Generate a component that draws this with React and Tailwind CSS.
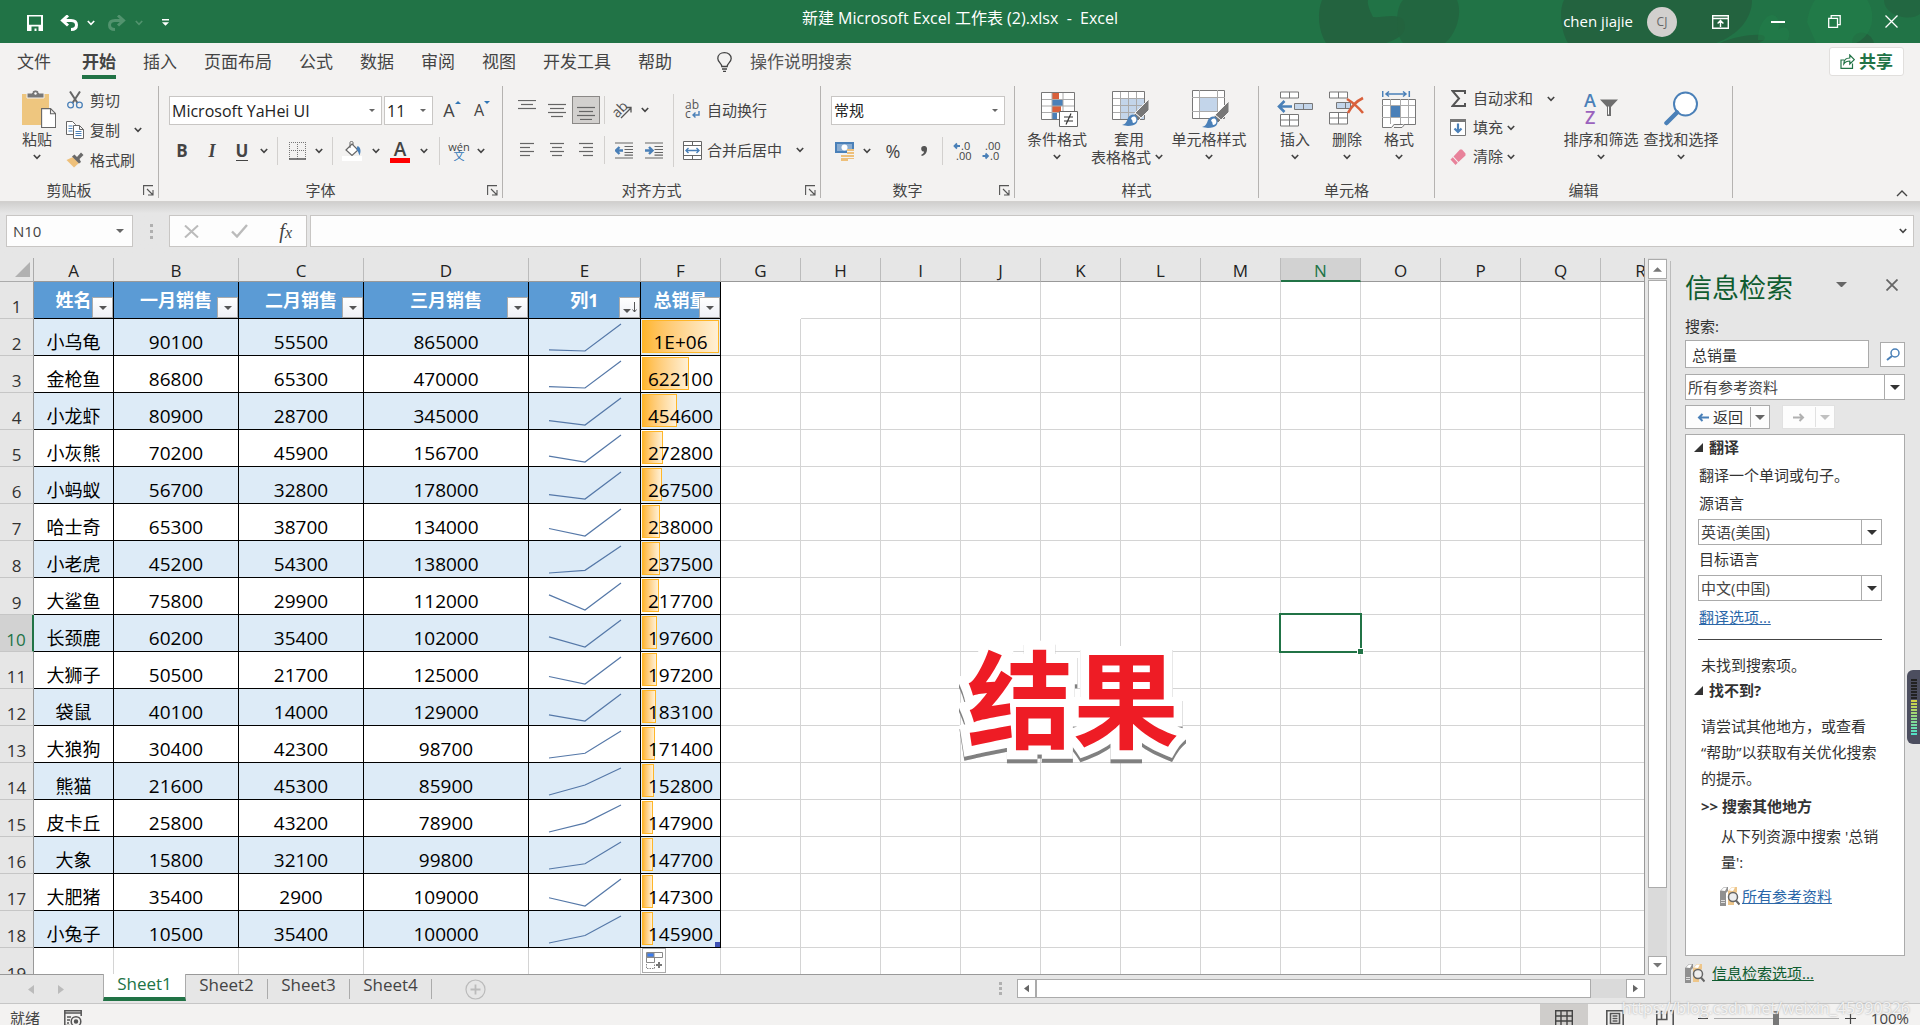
const tabs = ['插入', '页面布局', '公式', '数据', '审阅', '视图', '开发工具', '帮助'];

const rows = [
  ['小乌龟', 90100, 55500, 865000],
  ['金枪鱼', 86800, 65300, 470000],
  ['小龙虾', 80900, 28700, 345000],
  ['小灰熊', 70200, 45900, 156700],
  ['小蚂蚁', 56700, 32800, 178000],
  ['哈士奇', 65300, 38700, 134000],
  ['小老虎', 45200, 54300, 138000],
  ['大鲨鱼', 75800, 29900, 112000],
  ['长颈鹿', 60200, 35400, 102000],
  ['大狮子', 50500, 21700, 125000],
  ['袋鼠', 40100, 14000, 129000],
  ['大狼狗', 30400, 42300, 98700],
  ['熊猫', 21600, 45300, 85900],
  ['皮卡丘', 25800, 43200, 78900],
  ['大象', 15800, 32100, 99800],
  ['大肥猪', 35400, 2900, 109000],
  ['小兔子', 10500, 35400, 100000],
];

const headers = ['姓名', '一月销售', '二月销售', '三月销售', '列1', '总销量'];
const letters = 'ABCDEFGHIJKLMNOPQR'.split('');
const emptyCols = letters.slice(6);
const maxTotal = 1010600;

const Chevron = ({ className = 'w-4', color = '#444' }) => (
  <span className={`flex shrink-0 justify-center ${className}`}>
    <svg className="shrink-0" width="8" height="6" viewBox="0 0 8 6" fill="none" stroke={color} strokeWidth="1.6">
      <path d="M0.8 1 4 4.4 7.2 1" />
    </svg>
  </span>
);

const Caret = ({ color = '#666', size = 8 }) => (
  <svg className="shrink-0" width={size} height={size / 2} viewBox="0 0 8 4" fill={color}>
    <path d="M0 0h8L4 4z" />
  </svg>
);

const Sep = ({ className = 'mx-[5px]' }) => <span className={`h-7 w-px bg-[#d2d0ce] ${className}`} />;

const IconButton = ({ label, className = 'w-7', children }) => (
  <button aria-label={label} className={`flex h-7 shrink-0 items-center justify-center ${className}`}>
    {children}
  </button>
);

const Lines = ({ align, y = 3, color = '#666' }) => {
  const widths = align === 'top' ? [18, 12, 18] : align === 'mid' || align === 'bottom' ? [18, 14, 18, 12] : [14, 10, 14, 10];
  return (
    <svg width="18" height="20" viewBox="0 0 18 20" stroke={color} strokeWidth="1.2">
      {widths.map((w, i) => {
        const x = align === 'left' ? 2 : align === 'right' ? 16 - w : (18 - w) / 2;
        return <path key={i} d={`M${x} ${y + i * 4 + 0.5}h${w}`} />;
      })}
    </svg>
  );
};

const Group = ({ title, launcher, className, children }) => (
  <section className={`flex h-28 shrink-0 flex-col border-r border-[#b5b3b1] ${className}`}>
    <div className="flex flex-1">{children}</div>
    <div className="flex h-4 items-center">
      <span className={`flex-1 text-center leading-4 ${launcher ? '' : 'pl-5'}`}>{title}</span>
      <span className="flex w-5 justify-center">
        {launcher && (
          <button aria-label={`${title}设置`}>
            <svg width="11" height="11" viewBox="0 0 11 11" fill="none" stroke="#555" strokeWidth="1.1">
              <path d="M0.6 10V0.6H10M4 4l5.5 5.5M10 5v5H5" />
            </svg>
          </button>
        )}
      </span>
    </div>
  </section>
);

const BigButton = ({ icon, label, second, className }) => (
  <button className={`flex shrink-0 flex-col items-center pt-0.5 whitespace-nowrap ${className}`}>
    <span className="flex h-[42px] items-center">{icon}</span>
    <span className="leading-[18px]">{label}</span>
    <span className="flex h-[18px] items-center">
      {second}
      <Chevron />
    </span>
  </button>
);

const SmallButton = ({ icon, label, className = 'h-[30px]', chevron }) => (
  <button className={`flex items-center whitespace-nowrap ${className}`}>
    <span className="mr-1.5 flex w-[18px] justify-center">{icon}</span>
    {label}
    {chevron}
  </button>
);

const Select = ({ label, options, className, box, dark }) => (
  <span className={`relative flex ${className}`}>
    <select
      aria-label={label}
      className={`w-full appearance-none border bg-white outline-none ${dark ? 'border-[#ababab] pl-0.5 text-[#444]' : 'border-[#c8c6c4] pl-0.5 text-[#222]'}`}
    >
      {options.map((o) => (
        <option key={o}>{o}</option>
      ))}
    </select>
    <span
      className={`pointer-events-none absolute inset-y-0 right-0 flex w-[21px] items-center justify-center ${box ? 'border-l border-[#ababab]' : ''}`}
    >
      <Caret size={box ? 10 : 6} color={dark ? '#333' : '#666'} />
    </span>
  </span>
);

const TitleArt = () => (
  <svg className="absolute top-0 right-0" width="640" height="43" viewBox="0 0 640 43">
    <g fill="#23633f">
      <path d="M42 0c-5 12-4 30 4 43h60c12-4 24-10 17-24-8-6-20-1-30-2-4-8-6-14-5-17z" />
      <path d="M123 0c-8 8-8 34 0 43h42c10-8 18-28 12-43z" opacity=".8" />
      <path d="M284 0c-6 12-2 34 4 43h148c22-8 36-24 36-43z" />
      <path d="M440 43c14-6 30-9 42-8 6 2 2 6-4 8zM572 43c0-14 18-14 22 0z" />
      <path d="M604 0c0 16 26 22 36 14V0z" opacity=".7" />
    </g>
    <g fill="#217f4a">
      <path d="M527 22c4-26 16-30 27-30h26c18 14 16 42-4 51h-40z" opacity=".6" />
      <path d="M486 18c8-8 16 2 12 12 8-6 14 0 10 10h-30c0-8 2-16 8-22z" opacity=".5" />
    </g>
  </svg>
);

const TitleBar = () => (
  <header className="relative grid h-[43px] shrink-0 grid-cols-[1fr_auto_1fr] bg-[#217346] text-white">
    <TitleArt />
    <div className="flex items-center pt-0.5 pl-[21px]">
      <IconButton label="保存">
        <svg width="16" height="16" viewBox="0 0 16 16">
          <path d="M0 0h16v16H0z" fill="#fff" />
          <path d="M2 1.4h12v8.4H2zM4.5 11.400h7V16h-2v-2.600h-2V16h-3z" fill="#217346" />
        </svg>
      </IconButton>
      <IconButton label="撤消" className="ml-1 w-8">
        <svg width="18" height="16" viewBox="0 0 18 16" fill="none" stroke="#fff" strokeWidth="3">
          <path d="M2.500 5.500H11c3.500 0 5.500 1.800 5.500 4.500S14.500 14.500 11 14.500M8 0.500 2.500 5.500 8 10.500" />
        </svg>
      </IconButton>
      <Chevron className="w-3" color="#fff" />
      <IconButton label="恢复" className="ml-1 w-8">
        <svg width="18" height="16" viewBox="0 0 18 16" fill="none" stroke="#52936e" strokeWidth="3">
          <path d="M15.500 5.500H7c-3.500 0-5.500 1.800-5.500 4.500S3.500 14.500 7 14.500M10 0.500l5.500 5-5.500 5" />
        </svg>
      </IconButton>
      <Chevron className="w-3" color="#52936e" />
      <IconButton label="自定义快速访问工具栏" className="w-10">
        <svg width="7" height="7" viewBox="0 0 7 7" fill="#fff">
          <path d="M0 0h7v1.400H0zM0 3.200h7L3.500 6.800z" />
        </svg>
      </IconButton>
    </div>
    <h1 className="relative pt-[7px] text-base leading-[22px] whitespace-pre">新建 Microsoft Excel 工作表 (2).xlsx  -  Excel</h1>
    <div className="relative flex items-center justify-end">
      <span>chen jiajie</span>
      <span className="mr-[15px] ml-3.5 flex size-[30px] items-center justify-center rounded-full bg-[#d2d0ce] text-xs text-[#666]">CJ</span>
      <IconButton label="功能区显示选项" className="w-[57px]">
        <svg width="17" height="14" viewBox="0 0 17 14" fill="none" stroke="#fff" strokeWidth="1.400">
          <path d="M0.700 0.700h15.600v12.600H0.700zM0.700 3.500h15.600M8.500 12V5.600M5.600 8.400l2.900-2.900 2.900 2.900" />
        </svg>
      </IconButton>
      <IconButton label="最小化" className="w-[57px]">
        <span className="h-0.5 w-3.5 bg-white" />
      </IconButton>
      <IconButton label="向下还原" className="w-[57px]">
        <svg width="13" height="13" viewBox="0 0 13 13" fill="none" stroke="#fff" strokeWidth="1.300">
          <path d="M0.700 3.300h8.800v9H0.700zM3.200 3V0.700h9v9H10" />
        </svg>
      </IconButton>
      <IconButton label="关闭" className="w-[57px]">
        <svg width="13" height="13" viewBox="0 0 13 13" stroke="#fff" strokeWidth="1.300">
          <path d="M0.500 0.500l12 12M12.500 0.500l-12 12" />
        </svg>
      </IconButton>
    </div>
  </header>
);

const TabRow = () => (
  <nav className="flex h-[37px] shrink-0 items-start pr-4 pl-[17px] text-[17px] leading-[38px]">
    <a href="#file">文件</a>
    <a href="#home" className="ml-[31px] h-9 border-b-4 border-[#217346] font-bold">
      开始
    </a>
    {tabs.map((t) => (
      <a key={t} href={`#${t}`} className="ml-[27px]">
        {t}
      </a>
    ))}
    <button className="ml-[45px] flex items-center text-[#555]">
      <svg className="mr-[18px]" width="15" height="20" viewBox="0 0 15 20" fill="none" stroke="#444" strokeWidth="1.300">
        <path d="M4.800 14.500c0-3-4-4.300-4-8C0.800 3 3.700 0.700 7.500 0.700S14.200 3 14.200 6.500c0 3.700-4 5-4 8zM5 17h5M6 19.300h3" />
      </svg>
      操作说明搜索
    </button>
    <button className="mt-1 ml-auto flex h-[29px] w-[75px] items-center justify-center gap-1 rounded-[3px] border border-[#e1dfdd] bg-white font-bold text-[#217346]">
      <svg width="15" height="15" viewBox="0 0 15 15" fill="none" stroke="#217346" strokeWidth="1.200">
        <path d="M4 6H1v8.400h11.500v-5M3.800 10c0-4 2-6 6-6V1l4.500 4.600-4.500 4.400V7c-3 0-4.600.8-6 3z" />
      </svg>
      共享
    </button>
  </nav>
);

const Brush = ({ x, y }) => (
  <g transform={`translate(${x} ${y})`}>
    <path d="M27 0v11l-8 8-6-5z" fill="#777" stroke="#f3f2f1" />
    <path d="M13 14l6 5-3 3-5-5z" fill="#777" stroke="#f3f2f1" />
    <path d="M0 26c4-1 5-4 6-7 2-4 7-5 9-1 2 5-1 9-9 9z" fill="#4a80b8" />
    <path d="M9 20c1-3 4-3 5-1s0 5-3 5c-1-2 0-3-2-4z" fill="#fff" />
  </g>
);

const ClipboardGroup = () => (
  <Group title="剪贴板" launcher className="w-[159px]">
    <BigButton
      className="ml-2.5 w-[54px]"
      label="粘贴"
      icon={
        <svg className="ml-1" width="34" height="38" viewBox="0 0 34 38">
          <path d="M0 4h27v31H0z" fill="#eec67f" />
          <path d="M5 8V3h5c0-4 7-4 7 0h5v5z" fill="#777" stroke="#f3f2f1" />
          <circle cx="13.500" cy="3.500" r="1.200" fill="#fff" />
          <path d="M19.600 18.600h9l5 5v14h-14zM28.500 18.600v5.200h5" fill="#fff" stroke="#666" strokeWidth="1.100" />
        </svg>
      }
    />
    <div className="-mt-px flex flex-col pl-0.5">
      <SmallButton
        label="剪切"
        icon={
          <svg width="16" height="18" viewBox="0 0 16 18" fill="none">
            <path d="M3 0.500 10.500 12M13 0.500 5.500 12" stroke="#666" strokeWidth="2" />
            <circle cx="3.600" cy="14" r="2.900" stroke="#4a80b8" strokeWidth="1.300" />
            <circle cx="12.400" cy="14" r="2.900" stroke="#4a80b8" strokeWidth="1.300" />
          </svg>
        }
      />
      <SmallButton
        label="复制"
        chevron={<Chevron className="ml-2.5 w-4" />}
        icon={
          <svg width="18" height="18" viewBox="0 0 18 18" fill="#fff" stroke="#666">
            <path d="M0.500 0.500h6l3 3v10h-9z" />
            <path d="M2.500 5h4M2.500 7.500h4M2.500 10h4" stroke="#4a80b8" />
            <path d="M7.500 4.500h6l4 4v9h-10zM13.500 4.500v4h4" />
            <path d="M9.500 10.500h6M9.500 12.500h6M9.500 14.500h6" stroke="#4a80b8" />
          </svg>
        }
      />
      <SmallButton
        label="格式刷"
        icon={
          <svg width="18" height="16" viewBox="0 0 18 16">
            <path d="M0.500 8 7 5l6 6-5 4.500z" fill="#eec07a" />
            <path d="M6 4.500 8.500 2.500 11 5l4-4.500L17.500 3l-4 4 1.500 3-2 1.500z" fill="#6a6a6a" />
          </svg>
        }
      />
    </div>
  </Group>
);

const FontGroup = () => (
  <Group title="字体" launcher className="w-[344px]">
    <div className="flex flex-col gap-3 pt-2.5 pl-[9px]">
      <div className="flex">
        <Select label="字体" options={['Microsoft YaHei UI']} className="ml-px h-[29px] w-[213px] text-base" />
        <Select label="字号" options={['11']} className="mr-1 ml-0.5 h-[29px] w-[49px] text-base" />
        <IconButton label="增大字号" className="w-[30px]">
          <span className="text-lg">A</span>
          <svg className="mb-4" width="6" height="3" viewBox="0 0 8 4" fill="#2f75b5">
            <path d="M0 4h8L4 0z" />
          </svg>
        </IconButton>
        <IconButton label="减小字号" className="w-[30px]">
          <span className="text-base">A</span>
          <svg className="mb-4" width="6" height="3" viewBox="0 0 8 4" fill="#2f75b5">
            <path d="M0 0h8L4 4z" />
          </svg>
        </IconButton>
      </div>
      <div className="flex items-center">
        <IconButton label="加粗">
          <b className="text-[17px]">B</b>
        </IconButton>
        <IconButton label="倾斜" className="w-8">
          <i className="font-['Liberation_Serif',serif] text-lg font-bold">I</i>
        </IconButton>
        <IconButton label="下划线">
          <b className="border-b border-[#444] text-[17px] leading-[18px]">U</b>
        </IconButton>
        <Chevron />
        <Sep />
        <IconButton label="边框">
          <svg width="17" height="18" viewBox="0 0 17 18" fill="none" stroke="#777">
            <path d="M0 0.500h17M0.500 0v17M8.500 0v17M16.500 0v17M0 8.500h17" strokeDasharray="1 1" />
            <path d="M0 17h17" strokeWidth="1.500" stroke="#555" />
          </svg>
        </IconButton>
        <Chevron />
        <Sep />
        <IconButton label="填充颜色">
          <svg width="20" height="20" viewBox="0 0 20 20">
            <path d="M4 9 10 3l6 6-6 5.500z" fill="#fff" stroke="#666" strokeWidth="1.200" />
            <path d="M8 7V1.500c0-1.500 3-1.500 3 0V4" fill="none" stroke="#666" />
            <path d="M15.500 5c3 1 4 5 2 9.500-1-2-1-4-3-6z" fill="#4a80b8" />
            <path d="M0 15h20v5H0z" fill="#fff" />
          </svg>
        </IconButton>
        <Chevron className="w-5" />
        <IconButton label="字体颜色">
          <span className="border-b-[5px] border-[#f00] px-[4px] text-[19px] leading-[18px] font-semibold">A</span>
        </IconButton>
        <Chevron className="w-5" />
        <Sep />
        <IconButton label="拼音">
          <span className="flex flex-col items-center text-[11px] leading-[9px]">
            wén
            <span className="text-[11px] leading-[10px] text-[#2f75b5]">文</span>
          </span>
        </IconButton>
        <Chevron />
      </div>
    </div>
  </Group>
);

const Indent = ({ flip }) => (
  <svg width="18" height="17" viewBox="0 0 18 17" fill="none" stroke="#666" strokeWidth="1.200">
    <path d="M0 1h18M9.500 4.500H18M9.500 7.500H18M9.500 10.500H18M0 16h18M9.500 13.200H18" />
    <path d={flip ? 'M0 8.500h7M4 5l3.500 3.500L4 12' : 'M8 8.500H1M4.500 5 1 8.500 4.500 12'} stroke="#4a80b8" strokeWidth="2.400" />
  </svg>
);

const AlignGroup = () => (
  <Group title="对齐方式" launcher className="w-[318px]">
    <div className="flex w-[170px] flex-col gap-3 pt-2.5 pl-[9px]">
      <div className="flex items-center">
        <IconButton label="顶端对齐" className="w-[30px]">
          <Lines align="top" y={0} />
        </IconButton>
        <IconButton label="垂直居中" className="w-[30px]">
          <Lines align="mid" y={4} />
        </IconButton>
        <IconButton label="底端对齐" className="w-7 border border-[#8a8886] bg-[#d2d0ce]">
          <Lines align="bottom" y={7} />
        </IconButton>
        <Sep className="mr-1 ml-1" />
        <IconButton label="方向">
          <svg width="20" height="20" viewBox="0 0 20 20" overflow="visible">
            <text x="-1" y="14" transform="rotate(-45 7 10)" fontSize="14" fill="#555">
              ab
            </text>
            <path d="M8 18 18 8M13 7.500h5v5" fill="none" stroke="#555" strokeWidth="1.300" />
          </svg>
        </IconButton>
        <Chevron />
      </div>
      <div className="flex items-center">
        <IconButton label="左对齐" className="w-[30px]">
          <Lines align="left" />
        </IconButton>
        <IconButton label="居中" className="w-[30px]">
          <Lines align="center" />
        </IconButton>
        <IconButton label="右对齐" className="w-7">
          <Lines align="right" />
        </IconButton>
        <Sep className="mr-1 ml-1" />
        <IconButton label="减少缩进量" className="w-[30px]">
          <Indent />
        </IconButton>
        <IconButton label="增加缩进量" className="w-[30px]">
          <Indent flip />
        </IconButton>
      </div>
    </div>
    <span className="mt-2 h-[73px] w-px bg-[#d2d0ce]" />
    <div className="flex flex-col gap-3 pt-2.5 pl-[9px]">
      <SmallButton
        className="h-7"
        label="自动换行"
        icon={
          <svg width="18" height="20" viewBox="0 0 18 20" overflow="visible" fontSize="12" fill="#555">
            <text x="2" y="9">ab</text>
            <text x="2" y="18">c</text>
            <path d="M16 11v4H10M12.500 12.500 10 15l2.500 2.500" fill="none" stroke="#4a80b8" strokeWidth="1.400" />
          </svg>
        }
      />
      <SmallButton
        className="h-7"
        label="合并后居中"
        chevron={<Chevron className="ml-2 w-5" />}
        icon={
          <svg className="shrink-0" width="19" height="19" viewBox="0 0 19 19" fill="#fff" stroke="#666">
            <path d="M0.500 0.500h18v18h-18zM0.500 4.500h18M0.500 14.500h18M9.500 0.500v4M9.500 14.500v4" />
            <path d="M3 9.500h13M5.500 7 3 9.500 5.500 12M13.500 7 16 9.500 13.500 12" fill="none" stroke="#4a80b8" strokeWidth="1.400" />
          </svg>
        }
      />
    </div>
  </Group>
);

const Decimals = ({ top, bottom, arrowTop }) => (
  <svg width="18" height="20" viewBox="0 0 18 20" overflow="visible" fontSize="11" fill="#444">
    <text x={arrowTop ? 8 : 3} y="9">{top}</text>
    <text x={arrowTop ? 3 : 8} y="19">{bottom}</text>
    <path
      d={arrowTop ? 'M7 5H1.500M4 2.500 1.500 5 4 7.500' : 'M0.500 15H6M3.500 12.500 6 15l-2.500 2.500'}
      fill="none"
      stroke="#4a80b8"
      strokeWidth="1.800"
    />
  </svg>
);

const NumberGroup = () => (
  <Group title="数字" launcher className="w-[194px]">
    <div className="flex flex-col gap-3 pt-2.5 pl-2.5">
      <Select label="数字格式" options={['常规']} className="h-[29px] w-[174px]" />
      <div className="flex items-center">
        <IconButton label="会计数字格式">
          <svg width="20" height="20" viewBox="0 0 20 20">
            <path d="M0 1h19v11H0z" fill="#4a80b8" />
            <path d="M2 3h15v7H2z" fill="#fff" opacity=".35" />
            <circle cx="9.500" cy="6.500" r="3" fill="#fff" />
            <path d="M12 8h7v10h-7zM6 14h7v6H6z" fill="#eec07a" />
            <path d="M12 10.500h7M12 13.500h7M6 16.500h13" stroke="#f3f2f1" />
          </svg>
        </IconButton>
        <Chevron />
        <IconButton label="百分比" className="w-9">
          <span className="text-lg">%</span>
        </IconButton>
        <IconButton label="千位分隔" className="w-[26px]">
          <svg width="6" height="10" viewBox="0 0 6 10" fill="#555">
            <path d="M3 0a2.700 2.700 0 0 1 3 3c0 4-2 6.500-5.500 7v-1.500C2.200 8 3 7 3 5.600A2.700 2.700 0 0 1 3 0z" />
          </svg>
        </IconButton>
        <Sep />
        <IconButton label="增加小数位数">
          <Decimals top=".0" bottom=".00" arrowTop />
        </IconButton>
        <IconButton label="减少小数位数" className="w-[30px]">
          <Decimals top=".00" bottom=".0" />
        </IconButton>
      </div>
    </div>
  </Group>
);

const StyleGroup = () => (
  <Group title="样式" className="w-[244px]">
    <BigButton
      className="ml-[7px] w-[70px]"
      label="条件格式"
      icon={
        <svg className="ml-1" width="37" height="35" viewBox="0 0 37 35">
          <path d="M0.500 0.500h33v27h-33z" fill="#fff" />
          <path d="M11 1h7v6h-7zM11 14h9v6h-9z" fill="#d9603b" />
          <path d="M11 7h11v7H11zM11 20h5v7h-5z" fill="#4a80b8" />
          <path d="M0 7.500h33M0 14h33M0 20.500h33M11 0v28M22 0v28" stroke="#aaa" fill="none" />
          <path d="M0.500 0.500h33v27h-33z" fill="none" stroke="#777" />
          <path d="M18.500 19.500h18v15h-18z" fill="#fff" stroke="#666" />
          <path d="M23 25h9M23 29h9M30 21.500l-5 11" stroke="#333" strokeWidth="1.200" />
        </svg>
      }
    />
    <BigButton
      className="w-[74px]"
      label="套用"
      second={<span>表格格式</span>}
      icon={
        <svg className="ml-1" width="38" height="36" viewBox="0 0 38 36">
          <path d="M0.500 0.500h32v28h-32z" fill="#fff" />
          <path d="M9 8h23v20H9z" fill="#c3d5ea" />
          <path d="M0 7.500h33M0 14.500h33M0 21.500h33M8.500 0v28M16.500 0v28M24.500 0v28" stroke="#aaa" />
          <path d="M0.500 0.500h32v28h-32z" fill="none" stroke="#777" />
          <Brush x={10} y={8} />
        </svg>
      }
    />
    <BigButton
      className="w-[86px]"
      label="单元格样式"
      icon={
        <svg className="ml-1" width="38" height="39" viewBox="0 0 38 39">
          <path d="M0.500 0.500h32v28h-32z" fill="#fff" stroke="#777" />
          <path d="M8 8h17v13H8z" fill="#c3d5ea" />
          <path d="M0 7.500h33M0 21.500h33M7.500 0v28M25.500 0v28" stroke="#aaa" />
          <Brush x={10} y={11} />
        </svg>
      }
    />
  </Group>
);

const CellGroup = () => (
  <Group title="单元格" className="w-[176px]">
    <BigButton
      className="ml-2.5 w-[52px]"
      label="插入"
      icon={
        <svg width="36" height="36" viewBox="0 0 36 36" fill="#fff" stroke="#777">
          <path d="M3.500 1h18v6h-18zM12.500 1v6M3.500 23.500h18v11.500h-18zM12.500 23.500V35M3.500 29h18" />
          <path d="M17.500 12.500h18v6h-18zM26.500 12.500v6" fill="#c3d5ea" />
          <path d="M15 15.500H2M7.500 10 2 15.500 7.500 21" fill="none" stroke="#4a80b8" strokeWidth="2.600" />
        </svg>
      }
    />
    <BigButton
      className="w-[52px]"
      label="删除"
      icon={
        <svg width="36" height="36" viewBox="0 0 36 36" fill="#fff" stroke="#777">
          <path d="M0.500 1h18v6h-18zM9.500 1v6M0.500 21.500h18V33h-18zM9.500 21.500V33M0.500 27h18" />
          <path d="M7.500 11.500h14v6h-14zM16.500 11.500v6" fill="#c3d5ea" />
          <path d="M18 8c5 3 11 8 16 14M34 7c-6 3-12 9-15 15" fill="none" stroke="#d9603b" strokeWidth="2.600" />
        </svg>
      }
    />
    <BigButton
      className="w-[52px]"
      label="格式"
      icon={
        <svg width="35" height="37" viewBox="0 0 35 37">
          <path d="M0.500 8.500h33v25h-33z" fill="#fff" stroke="#777" />
          <path d="M0 14.500h33M0 26.500h33M8.500 8v25M18.500 8v25M26.500 8v25" stroke="#aaa" />
          <path d="M9 15h9v11H9z" fill="#4a80b8" />
          <path d="M0.500 33v3.500h9l3-3.500M12 36.500h8l3-3.500" fill="#fff" stroke="#777" />
          <path d="M0.700 0v6M27.300 0v6M4 3h20M7 0.500 4 3l3 2.500M21 0.500 24 3l-3 2.500" fill="none" stroke="#4a80b8" strokeWidth="1.500" />
        </svg>
      }
    />
  </Group>
);

const EditGroup = () => (
  <Group title="编辑" className="w-[298px]">
    <div className="-mt-0.5 flex w-[126px] flex-col pl-3.5">
      <SmallButton
        className="h-[29px]"
        label="自动求和"
        chevron={<Chevron className="ml-2.5 w-4" />}
        icon={
          <svg width="15" height="17" viewBox="0 0 15 17" fill="none" stroke="#555" strokeWidth="2">
            <path d="M14 4V1H1.500l6.500 7.500L1.500 16H14v-3" />
          </svg>
        }
      />
      <SmallButton
        className="h-[29px]"
        label="填充"
        chevron={<Chevron />}
        icon={
          <svg width="16" height="17" viewBox="0 0 16 17">
            <path d="M0.500 0.500h15v16h-15z" fill="#fff" stroke="#777" />
            <path d="M0 0h16v3H0z" fill="#777" />
            <path d="M8 4.500V13M4.500 9.500 8 13l3.500-3.500" fill="none" stroke="#4a80b8" strokeWidth="2.200" />
          </svg>
        }
      />
      <SmallButton
        className="h-[29px]"
        label="清除"
        chevron={<Chevron />}
        icon={
          <svg width="16" height="16" viewBox="0 0 16 16" fill="#e8829a">
            <path d="M10 0.500h2l3.500 4v2l-7 6.500-5-5.500zM2.800 8.200l5 5.500L5.500 16 0.500 10.500z" />
          </svg>
        }
      />
    </div>
    <BigButton
      className="w-20"
      label="排序和筛选"
      icon={
        <svg width="34" height="34" viewBox="0 0 34 34" overflow="visible" fontSize="18">
          <text x="0" y="14.500" fill="#4a80b8" fontWeight="600">A</text>
          <text x="1" y="32" fill="#9b62bd" fontWeight="600">Z</text>
          <path d="M16 7.500h18L27 15v9h-4v-9z" fill="#6e6e6e" />
          <path d="M24.500 14.500v8" stroke="#fff" />
        </svg>
      }
    />
    <BigButton
      className="w-20"
      label="查找和选择"
      icon={
        <svg width="34" height="36" viewBox="0 0 34 36">
          <circle cx="21.500" cy="13" r="11.500" fill="#fff" stroke="#4a80b8" strokeWidth="2" />
          <path d="M13 21.500 2.500 32" stroke="#4a80b8" strokeWidth="4.500" strokeLinecap="round" />
        </svg>
      }
    />
  </Group>
);

const Ribbon = () => (
  <div className="flex h-[122px] shrink-0 border-b border-[#d2d0ce] pt-1.5 text-[15px]">
    <ClipboardGroup />
    <FontGroup />
    <AlignGroup />
    <NumberGroup />
    <StyleGroup />
    <CellGroup />
    <EditGroup />
    <button aria-label="折叠功能区" className="mt-auto mr-3 mb-1 ml-auto">
      <svg width="12" height="7" viewBox="0 0 12 7" fill="none" stroke="#444" strokeWidth="1.400">
        <path d="M1 6 6 1l5 5" />
      </svg>
    </button>
  </div>
);

const FormulaBar = () => (
  <div className="flex h-14 shrink-0 items-start bg-gradient-to-b from-[#d0cfce] via-[#e6e6e6] via-20% to-[#e6e6e6] pt-[13px] pr-1.5 pl-1.5 text-[15px]">
    <div className="flex h-8 w-[127px] shrink-0 items-center border border-[#c8c6c4] bg-[#fdfdfd] pr-2">
      <input aria-label="名称框" defaultValue="N10" className="w-full min-w-0 bg-transparent pl-1.5 outline-none" />
      <Caret />
    </div>
    <div className="flex h-8 w-9 shrink-0 flex-col items-center justify-center gap-[3px]">
      <span className="size-[3px] bg-[#b0b0b0]" />
      <span className="size-[3px] bg-[#b0b0b0]" />
      <span className="size-[3px] bg-[#b0b0b0]" />
    </div>
    <div className="mr-[3px] flex h-8 w-[138px] shrink-0 items-center justify-between border border-[#c8c6c4] bg-[#fdfdfd] px-3.5">
      <button aria-label="取消">
        <svg width="15" height="13" viewBox="0 0 15 13" stroke="#bbb" strokeWidth="2">
          <path d="M1 0.500l13 12M14 0.500 1 12.500" />
        </svg>
      </button>
      <button aria-label="输入">
        <svg width="17" height="14" viewBox="0 0 17 14" fill="none" stroke="#bbb" strokeWidth="2.400">
          <path d="M1 7.500l5 5L16 1" />
        </svg>
      </button>
      <button aria-label="插入函数" className="font-['Liberation_Serif',serif] text-xl leading-7 italic">
        f<span className="text-base">x</span>
      </button>
    </div>
    <div className="flex h-8 flex-1 items-center border border-[#c8c6c4] bg-[#fdfdfd] pr-1">
      <input aria-label="编辑栏" className="w-full bg-transparent px-2 outline-none" />
      <Chevron className="w-3" />
    </div>
  </div>
);

const Sparkline = ({ values }) => {
  const min = Math.min(...values);
  const max = Math.max(...values);
  const points = values.map((v, i) => `${i * 36 + 1},${28 - ((v - min) / (max - min)) * 27}`).join(' ');
  return (
    <svg className="mx-auto" width="74" height="29" viewBox="0 0 74 29">
      <polyline points={points} fill="none" stroke="#5578a8" strokeWidth="1.200" />
    </svg>
  );
};

const FilterButton = ({ label, sorted }) => (
  <button
    aria-label={`筛选${label}`}
    className="absolute right-0 bottom-0 flex h-[21px] w-[21px] items-center justify-center border border-[#ababab] bg-gradient-to-b from-white to-[#eef0f5]"
  >
    {sorted ? (
      <svg width="14" height="12" viewBox="0 0 14 12">
        <path d="M0 7h8l-4 4z" fill="#555" />
        <path d="M11.500 0v10M9.500 7.500l2 2.500 2-2.500" stroke="#555" fill="none" />
      </svg>
    ) : (
      <Caret color="#555" />
    )}
  </button>
);

const numberCell = 'border-r border-b border-black p-0 pb-px align-bottom text-[19px] leading-6';
const rowHead = 'p-0 align-bottom text-[17px] leading-[22px] font-normal';

const Sheet = () => (
  <div className="min-w-0 flex-1 overflow-hidden border-r border-b border-[#999] bg-white">
    <table className="w-[1806px] table-fixed border-separate border-spacing-0 text-center text-black">
      <colgroup>
        <col className="w-[34px]" />
        <col className="w-[80px]" />
        <col className="w-[125px]" />
        <col className="w-[125px]" />
        <col className="w-[165px]" />
        <col className="w-[112px]" />
        <col className="w-[80px]" />
        {emptyCols.map((c) => (
          <col key={c} className="w-[80px]" />
        ))}
        <col />
      </colgroup>
      <thead>
        <tr className="h-6 bg-[#e6e6e6] text-[17px] leading-[18px]">
          <th className="border-r border-b border-[#ababab] p-0" aria-label="全选">
            <svg className="mr-[3px] ml-auto" width="15" height="15" viewBox="0 0 15 15" fill="#b1b1b1">
              <path d="M15 0v15H0z" />
            </svg>
          </th>
          {letters.map((c) => (
            <th
              key={c}
              scope="col"
              className={`border-r border-r-[#bbb] p-0 pt-[3px] font-normal ${
                c === 'N' ? 'border-b-2 border-b-[#217346] bg-[#d2d2d2] text-[#217346]' : 'border-b border-b-[#999] text-[#222]'
              }`}
            >
              {c}
            </th>
          ))}
        </tr>
      </thead>
      <tbody>
        <tr className="h-[37px]">
          <th scope="row" className={`${rowHead} border-r border-b border-r-[#999] border-b-[#c6c6c6] bg-[#e6e6e6] text-[#333]`}>
            1
          </th>
          {headers.map((h, i) => (
            <th key={h} scope="col" className="relative border-r border-b border-black bg-[#5b9bd5] p-0 text-lg leading-6 font-bold text-white">
              {h}
              <FilterButton label={h} sorted={i === 4} />
            </th>
          ))}
          {emptyCols.map((c) => (
            <td key={c} className={c === 'G' ? '' : 'border-r border-b border-[#d4d4d4]'} />
          ))}
        </tr>
        {rows.map(([name, jan, feb, mar], i) => {
          const total = jan + feb + mar;
          const n = i + 2;
          return (
            <tr key={name} className="h-[37px]">
              <th
                scope="row"
                className={`${rowHead} border-b border-b-[#c6c6c6] ${
                  n === 10 ? 'border-r-2 border-r-[#217346] bg-[#d2d2d2] text-[#217346]' : 'border-r border-r-[#999] bg-[#e6e6e6] text-[#333]'
                }`}
              >
                {n}
              </th>
              <td className={`border-r border-b border-black p-0 pb-px align-bottom text-lg leading-6 ${i % 2 ? '' : 'bg-[#ddebf7]'}`}>{name}</td>
              {[jan, feb, mar].map((v, j) => (
                <td key={j} className={`${numberCell} ${i % 2 ? '' : 'bg-[#ddebf7]'}`}>
                  {v}
                </td>
              ))}
              <td className={`border-r border-b border-black p-0 ${i % 2 ? '' : 'bg-[#ddebf7]'}`}>
                <Sparkline values={[jan, feb, mar]} />
              </td>
              <td className={`relative ${numberCell} ${i % 2 ? '' : 'bg-[#ddebf7]'}`}>
                <span
                  className="absolute top-px bottom-0.5 left-px border border-[#ffb628] bg-gradient-to-r from-[#ffb628] to-[#fff0d4]"
                  style={{ width: Math.round((total / maxTotal) * 77) }}
                />
                <span className="relative">{total >= 1e6 ? '1E+06' : total}</span>
                {n === 18 && <span className="absolute right-0 bottom-0 size-[5px] bg-[#3f51b5]" />}
              </td>
              {emptyCols.map((c) => (
                <td key={c} className="relative border-r border-b border-[#d4d4d4] p-0">
                  {n === 10 && c === 'N' && (
                    <span className="absolute -inset-0.5 z-10 border-2 border-[#217346]">
                      <span className="absolute -right-[4px] -bottom-[4px] size-[7px] border border-white bg-[#217346]" />
                    </span>
                  )}
                </td>
              ))}
            </tr>
          );
        })}
        <tr className="h-[37px]">
          <th scope="row" className={`${rowHead} border-r border-r-[#999] bg-[#e6e6e6] text-[#333]`}>
            19
          </th>
          {letters.map((c) => (
            <td key={c} className="border-r border-[#d4d4d4] p-0 align-top">
              {c === 'F' && (
                <button aria-label="快速分析" className="ml-px flex h-[25px] w-6 items-center justify-center border border-[#ababab] bg-white">
                  <svg width="17" height="17" viewBox="0 0 17 17" fill="none" stroke="#888">
                    <path d="M0.500 0.500h16v5h-16zM0.500 5.500h8v5h-8z" />
                    <path d="M1 1h7v4H1z" fill="#3b7df0" />
                    <path d="M0.500 12v4.500h8V12" strokeDasharray="1.500 1" />
                    <path d="M10 13h6M13 10v6" strokeWidth="2" stroke="#777" />
                  </svg>
                </button>
              )}
            </td>
          ))}
        </tr>
      </tbody>
    </table>
  </div>
);

const VScroll = () => (
  <div className="mx-[3px] flex w-[19px] shrink-0 flex-col bg-[#dadada] pt-px">
    <button aria-label="向上滚动" className="flex h-5 shrink-0 items-center justify-center border border-[#ababab] bg-white">
      <svg width="9" height="5" viewBox="0 0 8 4" fill="#777">
        <path d="M0 4h8L4 0z" />
      </svg>
    </button>
    <span className="mt-px flex-[607] border border-[#ababab] bg-white" />
    <span className="flex-[68]" />
    <button aria-label="向下滚动" className="flex h-[19px] shrink-0 items-center justify-center border border-[#ababab] bg-white">
      <Caret color="#777" size={9} />
    </button>
  </div>
);

const SheetTabs = () => (
  <div className="flex h-7 shrink-0 items-start pr-[25px] text-[17px] leading-6">
    <div className="flex h-7 w-[103px] shrink-0 items-center gap-6 pl-7">
      <svg width="6" height="9" viewBox="0 0 6 9" fill="#bbb">
        <path d="M6 0v9L0 4.500z" />
      </svg>
      <svg width="6" height="9" viewBox="0 0 6 9" fill="#bbb">
        <path d="M0 0v9l6-4.500z" />
      </svg>
    </div>
    <button className="-mt-px h-[27px] w-[83px] shrink-0 border-x border-b-4 border-x-[#ababab] border-b-[#217346] bg-white pb-1 leading-[19px] text-[#217346]">
      Sheet1
    </button>
    {['Sheet2', 'Sheet3', 'Sheet4'].map((s) => (
      <div key={s} className="flex h-[26px] w-[82px] shrink-0 items-start">
        <button className="flex-1 leading-5">{s}</button>
        <span className="mt-1 h-5 w-px bg-[#ababab]" />
      </div>
    ))}
    <button aria-label="新工作表" className="mt-1 ml-[33px]">
      <svg width="21" height="21" viewBox="0 0 21 21" fill="none" stroke="#bbb">
        <circle cx="10.500" cy="10.500" r="9.500" strokeWidth="1.200" />
        <path d="M5.500 10.500h10M10.500 5.500v10" strokeWidth="1.800" />
      </svg>
    </button>
    <div className="mt-1 ml-auto flex items-center">
      <div className="mr-[15px] flex flex-col gap-0.5">
        <span className="size-[3px] bg-[#b0b0b0]" />
        <span className="size-[3px] bg-[#b0b0b0]" />
        <span className="size-[3px] bg-[#b0b0b0]" />
      </div>
      <div className="flex h-[19px] w-[628px] bg-[#dadada]">
        <button aria-label="向左滚动" className="flex w-[19px] items-center justify-center border border-[#ababab] bg-white">
          <svg width="5" height="9" viewBox="0 0 6 9" fill="#666">
            <path d="M6 0v9L0 4.500z" />
          </svg>
        </button>
        <span className="w-[555px] border border-[#ababab] bg-white" />
        <button aria-label="向右滚动" className="ml-auto flex w-[19px] items-center justify-center border border-[#ababab] bg-white">
          <svg width="5" height="9" viewBox="0 0 6 9" fill="#666">
            <path d="M0 0v9l6-4.500z" />
          </svg>
        </button>
      </div>
    </div>
  </div>
);

const BookIcon = () => (
  <svg className="shrink-0" width="20" height="20" viewBox="0 0 20 20">
    <path d="M0 5l4-4h4v4L6 7v13H0z" fill="#909090" />
    <path d="M1 4.500 4 1.500h3L5 5z" fill="#fff" />
    <path d="M1 14.500h4M1 16.500h4" stroke="#ddd" />
    <path d="M8 5l4-4h5v5l-3 3v10H8z" fill="#eec68a" />
    <path d="M9 4.500 12 1.500h3L13 5z" fill="#fff" />
    <circle cx="13" cy="11" r="4.500" fill="#eee" stroke="#666" strokeWidth="1.500" />
    <path d="M16 14.500l3.500 4" stroke="#666" strokeWidth="2" />
  </svg>
);

const Corner = () => (
  <svg width="9" height="9" viewBox="0 0 9 9" fill="#333">
    <path d="M9 0v9H0z" />
  </svg>
);

const ResearchPane = () => (
  <aside className="mt-[3px] flex w-[250px] shrink-0 flex-col border-l border-[#bbb] pr-[15px] pl-3.5 text-[15px] text-[#333]">
    <div className="flex h-[55px] items-center">
      <h2 className="flex-1 text-[27px] text-[#0f5c30]">信息检索</h2>
      <button aria-label="任务窗格选项" className="mr-[39px] mb-2">
        <Caret size={11} />
      </button>
      <button aria-label="关闭窗格" className="mr-[7px] mb-2">
        <svg width="12" height="12" viewBox="0 0 12 12" stroke="#666" strokeWidth="1.800">
          <path d="M0.500 0.500l11 11M11.500 0.500l-11 11" />
        </svg>
      </button>
    </div>
    <label htmlFor="query" className="h-6 leading-5">
      搜索:
    </label>
    <div className="flex items-center justify-between">
      <input id="query" defaultValue="总销量" className="h-7 w-[184px] border border-[#ababab] bg-white px-1.5 outline-none" />
      <button aria-label="开始搜索" className="flex size-[25px] items-center justify-center border border-[#ababab] bg-white">
        <svg width="14" height="13" viewBox="0 0 14 13" fill="none" stroke="#4a80b8">
          <circle cx="9" cy="5" r="4" strokeWidth="1.500" />
          <path d="M6 8l-5 4" strokeWidth="2" />
        </svg>
      </button>
    </div>
    <Select label="参考资料" options={['所有参考资料']} className="mt-1.5 h-[26px]" box dark />
    <div className="mt-[5px] flex h-6 gap-3">
      <div className="flex w-[85px] border border-[#ababab] bg-[#fdfdfd]">
        <button className="flex flex-1 items-center justify-center gap-1 pl-1 leading-5">
          <svg width="12" height="9" viewBox="0 0 12 9" fill="none" stroke="#4a80b8" strokeWidth="2">
            <path d="M12 4.500H2M5.500 1 2 4.500 5.500 8" />
          </svg>
          返回
        </button>
        <button aria-label="返回列表" className="my-px flex w-[19px] items-center justify-center border-l border-[#ababab]">
          <Caret size={10} />
        </button>
      </div>
      <div className="flex w-[53px] border border-[#e1e1e1] bg-[#fdfdfd]">
        <button aria-label="前进" className="flex flex-1 items-center justify-center">
          <svg width="12" height="9" viewBox="0 0 12 9" fill="none" stroke="#b0b0b0" strokeWidth="2">
            <path d="M0 4.500h10M6.500 1 10 4.500 6.500 8" />
          </svg>
        </button>
        <button aria-label="前进列表" className="my-px flex w-[19px] items-center justify-center border-l border-[#e1e1e1]">
          <Caret color="#c0c0c0" size={10} />
        </button>
      </div>
    </div>
    <div className="mt-[5px] flex h-[522px] flex-col border border-[#ababab] bg-white pr-[22px] pl-3">
      <h3 className="-ml-1 flex h-6 items-center gap-1.5 font-bold">
        <Corner />
        翻译
      </h3>
      <p className="mt-[3px] pl-px leading-[26px]">翻译一个单词或句子。</p>
      <span className="mt-0.5 mb-[3px] pl-px leading-[26px]">源语言</span>
      <Select label="源语言" options={['英语(美国)']} className="h-[26px]" box dark />
      <span className="mt-px mb-[3px] pl-px leading-[26px]">目标语言</span>
      <Select label="目标语言" options={['中文(中国)']} className="h-[26px]" box dark />
      <a href="#options" className="mt-[3px] ml-px self-start leading-[26px] text-[#2b67a8] underline">
        翻译选项...
      </a>
      <hr className="mt-[9px] mb-3 border-[#444]" />
      <p className="pl-[3px] leading-[26px]">未找到搜索项。</p>
      <h3 className="-ml-1 flex h-6 items-center gap-1.5 font-bold">
        <Corner />
        找不到?
      </h3>
      <p className="mt-[11px] -mr-1.5 pl-[3px] leading-[26px]">
        请尝试其他地方，或查看
        <br />
        “帮助”以获取有关优化搜索的提示。
      </p>
      <h4 className="mt-0.5 pl-[3px] leading-[26px] font-bold">&gt;&gt; 搜索其他地方</h4>
      <p className="mt-1 -mr-1.5 pl-[23px] leading-[26px]">从下列资源中搜索 '总销量':</p>
      <a href="#all" className="mt-2 flex items-center gap-0.5 pl-[22px] leading-[26px] text-[#2b67a8]">
        <BookIcon />
        <span className="underline">所有参考资料</span>
      </a>
    </div>
    <a href="#research" className="mt-1 flex items-center gap-[7px] leading-[26px] text-[#0f5c30]">
      <BookIcon />
      <span className="underline">信息检索选项...</span>
    </a>
  </aside>
);

const StatusBar = () => (
  <footer className="relative flex h-[22px] shrink-0 items-start overflow-hidden border-t border-[#c6c6c6] bg-[#f3f2f1] text-[15px] leading-7">
    <span className="pl-2.5">就绪</span>
    <svg className="mt-1.5 ml-6" width="18" height="17" viewBox="0 0 18 17" fill="none" stroke="#555" strokeWidth="1.500">
      <path d="M6 15.500H0.800V0.800h16.400V6M0.800 3h16.400M3 7h4M3 10h3M3 13h2" />
      <circle cx="12" cy="11.500" r="4.800" />
      <circle cx="12" cy="11.500" r="1.500" fill="#555" />
    </svg>
    <div className="ml-auto flex h-7 items-center">
      <button aria-label="普通" className="flex h-7 w-12 items-center justify-center bg-[#cfcdcb]">
        <svg width="18" height="17" viewBox="0 0 18 17" fill="none" stroke="#444" strokeWidth="1.400">
          <path d="M0.700 0.700h16.600v15.600H0.700zM0.700 6h16.600M0.700 11h16.600M6 0.700v15.600M12 0.700v15.600" />
        </svg>
      </button>
      <button aria-label="页面布局" className="flex w-[54px] justify-center">
        <svg width="18" height="17" viewBox="0 0 18 17" fill="none" stroke="#555" strokeWidth="1.600">
          <path d="M0.800 0.800h16.400v15.400H0.800zM4.500 3.500h9v10h-9zM6.500 6h5M6.500 8.500h5M6.500 11h5" />
        </svg>
      </button>
      <button aria-label="分页预览" className="flex w-[46px] justify-center">
        <svg width="18" height="17" viewBox="0 0 18 17" fill="none" stroke="#555" strokeWidth="1.600">
          <path d="M0.800 0.800v15.400h16.400V0.800h-3M0.800 9.500h10V0.800M5.500 0.800v8.700" />
        </svg>
      </button>
      <span className="ml-2.5 h-px w-2.5 bg-[#444]" />
      <input
        type="range"
        aria-label="缩放"
        min="0"
        max="200"
        defaultValue="100"
        className="mx-1.5 h-3.5 w-[125px] appearance-none bg-[linear-gradient(#aaa,#aaa)] bg-[length:100%_1px] bg-center bg-no-repeat [&::-webkit-slider-thumb]:h-3.5 [&::-webkit-slider-thumb]:w-1.5 [&::-webkit-slider-thumb]:appearance-none [&::-webkit-slider-thumb]:bg-[#777]"
      />
      <svg width="11" height="11" viewBox="0 0 11 11" stroke="#444" strokeWidth="1.200">
        <path d="M0 5.500h11M5.500 0v11" />
      </svg>
      <span className="mr-[11px] ml-[15px]">100%</span>
    </div>
  </footer>
);

const App = () => (
  <div className="relative flex h-screen flex-col overflow-hidden bg-[#f3f2f1] font-['Open_Sans','Noto_Sans_CJK_SC',sans-serif] text-[15px] text-[#444]">
    <TitleBar />
    <TabRow />
    <Ribbon />
    <FormulaBar />
    <main className="flex min-h-0 flex-1 bg-[#e6e6e6]">
      <div className="relative flex min-w-0 flex-1 flex-col">
        <div className="flex min-h-0 flex-1">
          <Sheet />
          <VScroll />
        </div>
        <SheetTabs />
        <p className="absolute top-[368px] left-[967px] z-20 font-['Noto_Sans_CJK_SC',sans-serif] text-[106px] leading-[136px] font-bold text-[#ee1c25] drop-shadow-[0_4px_0_#808080] [-webkit-text-stroke:18px_#fff] [paint-order:stroke_fill]">
          结果
        </p>
      </div>
      <ResearchPane />
    </main>
    <StatusBar />
    <div className="absolute top-[670px] right-0 flex h-[74px] w-[13px] flex-col justify-center rounded-l-md bg-[#4c4e5f] pl-1">
      <span className="h-14 w-1.5 bg-[repeating-linear-gradient(transparent_0_2px,#4c4e5f_2px_3px),linear-gradient(#222_35%,#d9d13c_35%,#4fe0c8)]" />
    </div>
    <span className="pointer-events-none absolute right-2.5 bottom-[7px] text-base leading-5 text-white/80 [text-shadow:0_0_2px_#999]">https://blog.csdn.net/weixin_45990326</span>
  </div>
);

export default App;
